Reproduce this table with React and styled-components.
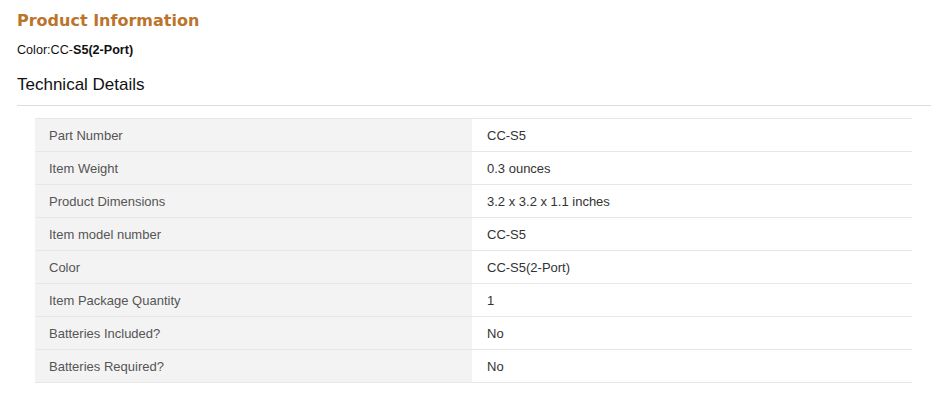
import React from "react";
import styled, { createGlobalStyle } from "styled-components";

const Global = createGlobalStyle`
  html, body { margin: 0; padding: 0; background: #fff; }
  body { font-family: "Liberation Sans", Arial, sans-serif; }
`;

const Page = styled.div`
  padding: 11px 21px 0 17px;
`;

const Title = styled.h2`
  margin: 0;
  font-family: "DejaVu Sans", Verdana, sans-serif;
  font-weight: bold;
  font-size: 16px;
  line-height: 20px;
  color: #bb742c;
`;

const ColorLine = styled.div`
  margin-top: 11px;
  font-size: 12.6px;
  line-height: 16px;
  color: #111;
  b { font-weight: bold; }
`;

const Heading = styled.h3`
  margin: 16px 0 0;
  font-weight: normal;
  font-size: 17px;
  line-height: 22px;
  color: #111;
`;

const Rule = styled.hr`
  margin: 9px 0 0;
  border: 0;
  border-top: 1px solid #dddddd;
  height: 0;
`;

const Table = styled.div`
  margin: 12px 19px 0 18px;
  border-top: 1px solid #e7e7e7;
`;

const Row = styled.div`
  display: grid;
  grid-template-columns: 437px 1fr;
  height: 32px;
  border-bottom: 1px solid #e7e7e7;
`;

const Cell = styled.div`
  display: flex;
  align-items: center;
  font-size: 13px;
  padding-left: ${(p) => (p.$label ? "14px" : "15px")};
  background: ${(p) => (p.$label ? "#f3f3f3" : "#fff")};
  color: ${(p) => (p.$label ? "#555" : "#333")};
`;

const rows = [
  ["Part Number", "CC-S5"],
  ["Item Weight", "0.3 ounces"],
  ["Product Dimensions", "3.2 x 3.2 x 1.1 inches"],
  ["Item model number", "CC-S5"],
  ["Color", "CC-S5(2-Port)"],
  ["Item Package Quantity", "1"],
  ["Batteries Included?", "No"],
  ["Batteries Required?", "No"],
];

export default function App() {
  return (
    <Page>
      <Global />
      <Title>Product Information</Title>
      <ColorLine>
        Color:CC-<b>S5(2-Port)</b>
      </ColorLine>
      <Heading>Technical Details</Heading>
      <Rule />
      <Table>
        {rows.map(([k, v]) => (
          <Row key={k}>
            <Cell $label>{k}</Cell>
            <Cell>{v}</Cell>
          </Row>
        ))}
      </Table>
    </Page>
  );
}
